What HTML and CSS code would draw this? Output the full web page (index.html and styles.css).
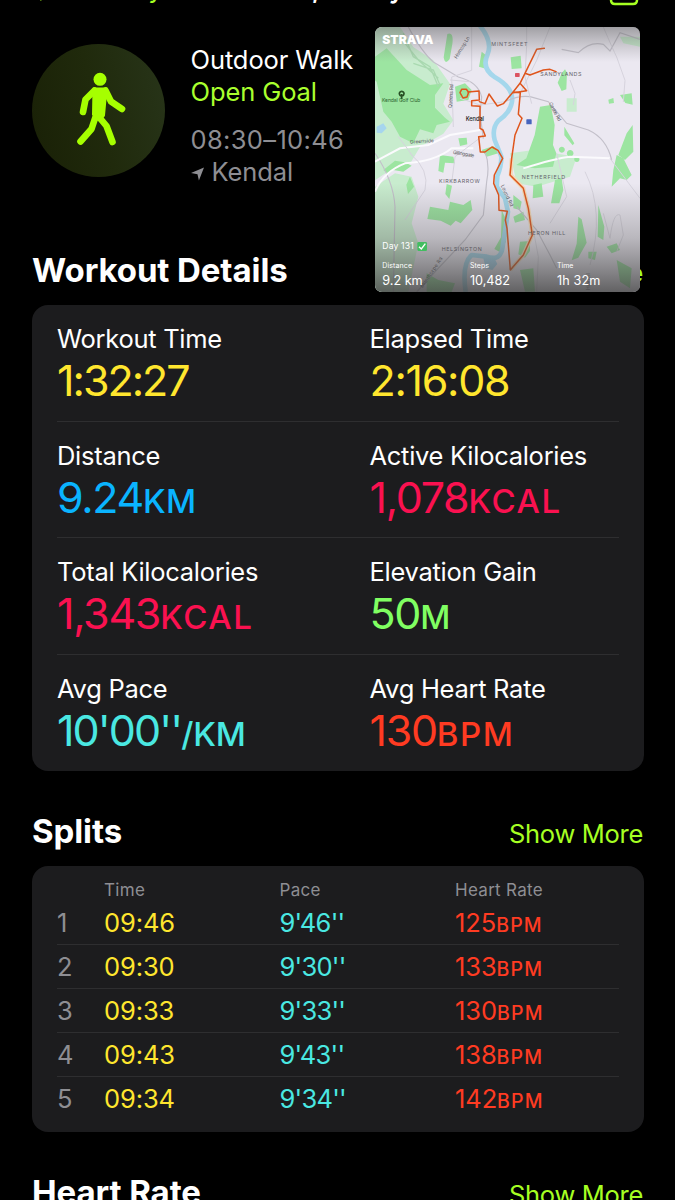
FILE: index.html
```html
<!DOCTYPE html>
<html lang="en">
<head>
<meta charset="utf-8">
<title>Outdoor Walk</title>
<link rel="stylesheet" href="styles.css">
</head>
<body>
<nav class="nav">
  <span class="back"><svg class="chevron" viewBox="0 0 14 24"><path d="M12 2 3 12l9 10"/></svg>Summary</span>
  <span class="nav-title">Tue, 11 May</span>
  <svg class="share" viewBox="0 0 30 36"><path d="M10 12H6q-4 0-4 4v14q0 4 4 4h18q4 0 4-4V16q0-4-4-4h-4M15 22V2M9 8l6-6 6 6"/></svg>
</nav>
<main class="page">
  <header class="summary">
    <div class="badge">
      <svg class="walker" viewBox="0 0 170 160">
        <circle cx="80" cy="49.3" r="6.5"/>
        <path class="torso" d="M73.500 58.500h13l-2.500 27-4.500 5-6.500-6z"/>
        <path class="limb" d="M74.500 60.500 65.500 69.500 63 82M85.500 60.500 91 71.500 102 79M75.500 87 71.500 99 60.500 111.500M79 87 86.500 96 92.500 112"/>
      </svg>
    </div>
    <div class="intro">
      <p class="name">Outdoor Walk</p>
      <p class="goal">Open Goal</p>
      <p class="when">08:30–10:46</p>
      <p class="place"><svg class="arrow" viewBox="0 0 14 14"><path d="M14 0 8.500 14 7 7.200 0 6z"/></svg>Kendal</p>
    </div>
  </header>

  <div class="section-head details-head"><h2>Workout Details</h2><a class="more">Show More</a></div>
  <section class="card details">
    <div class="row">
      <div class="cell"><p class="label">Workout Time</p><p class="value time yellow">1:32:27</p></div>
      <div class="cell"><p class="label">Elapsed Time</p><p class="value yellow">2:16:08</p></div>
    </div>
    <div class="row">
      <div class="cell"><p class="label">Distance</p><p class="value blue">9.24<small>KM</small></p></div>
      <div class="cell"><p class="label">Active Kilocalories</p><p class="value pink">1,078<small>KCAL</small></p></div>
    </div>
    <div class="row">
      <div class="cell"><p class="label">Total Kilocalories</p><p class="value pink">1,343<small>KCAL</small></p></div>
      <div class="cell"><p class="label">Elevation Gain</p><p class="value green">50<small>M</small></p></div>
    </div>
    <div class="row">
      <div class="cell"><p class="label">Avg Pace</p><p class="value pace cyan">10'00''<small>/KM</small></p></div>
      <div class="cell"><p class="label">Avg Heart Rate</p><p class="value red">130<small>BPM</small></p></div>
    </div>
  </section>

  <div class="section-head splits-head"><h2>Splits</h2><a class="more">Show More</a></div>
  <section class="card splits">
    <div class="split-row split-head"><span></span><span>Time</span><span>Pace</span><span>Heart Rate</span></div>
    <div class="split-row"><span class="num">1</span><span class="yellow">09:46</span><span class="pace cyan">9'46''</span><span class="red">125<small>BPM</small></span></div>
    <div class="split-row"><span class="num">2</span><span class="yellow">09:30</span><span class="pace cyan">9'30''</span><span class="red">133<small>BPM</small></span></div>
    <div class="split-row"><span class="num">3</span><span class="yellow">09:33</span><span class="pace cyan">9'33''</span><span class="red">130<small>BPM</small></span></div>
    <div class="split-row"><span class="num">4</span><span class="yellow">09:43</span><span class="pace cyan">9'43''</span><span class="red">138<small>BPM</small></span></div>
    <div class="split-row"><span class="num">5</span><span class="yellow">09:34</span><span class="pace cyan">9'34''</span><span class="red">142<small>BPM</small></span></div>
  </section>

  <div class="section-head heart-head"><h2>Heart Rate</h2><a class="more">Show More</a></div>
</main>

<svg class="map" viewBox="15 21 795 795">
  <defs>
    <linearGradient id="top" x2="0" y2="1"><stop offset="0" stop-color="#555" stop-opacity=".5"/><stop offset="1" stop-color="#777" stop-opacity="0"/></linearGradient>
    <linearGradient id="bottom" x2="0" y2="1"><stop offset="0" stop-color="#555" stop-opacity="0"/><stop offset=".5" stop-color="#555" stop-opacity=".33"/><stop offset="1" stop-color="#444" stop-opacity=".82"/></linearGradient>
  </defs>
  <rect x="15" y="21" width="795" height="795" fill="#ebe8f1"/>
  <g class="meadow">
    <path d="M15 21h75l40 60 60 40 50 70-20 60 30 50-30 40-70 40-30 50-60 20-45 30z"/>
    <path d="M15 500l60-40 50 10 20 60-20 80 20 60-30 146H15z"/>
    <path d="M420 400l70-10 130 20-20 60-100 30-60-10z"/>
    <path d="M590 235l30 0 0 40-30 0zM750 50l60 0v30l-50-10z"/>
  </g>
  <g class="park">
    <path d="M15 110 50 85l60 65 70 45 40-5-25 35 0 38 30 30 15 12-40 10-10 25-40-12-20 42-40-20-25-45-25-30-20-90-20-15z"/>
    <path d="M232 42q20-8 15 30l-8 45q-14 20-18-5zM255 200l30-10 20 20-10 30-35 5zM335 95l12 10-5 40-15-5zM265 355l25-2 2 20-22 5zM422 112l30-5 3 38-30 2z"/>
    <path d="M575 160l10-12 6 10-2 50-14 5-12-25zM510 260l32-5 12 60-5 60 10 25-10 40-55 5-55-10 30-20 25-70zM715 239l15-5 2 15-15 2zM750 225l35-5 3 34-22-5zM770 340l18-25 2 80-25 25-20-15zM600 390a10 10 0 1 0 1 0M575 380a9 9 0 1 0 1 0M620 410a8 8 0 1 0 1 0M583 320l30 50-5 6-25-30z"/>
    <path d="M335 390l35-12 20 20-40 12zM40 450l35-28 30 5 20 10-25 18-30-5-15 12zM120 470l12 30-18 22-5-28zM180 560l55 10 5-25 40 10 22-15 5 30-35 40-15-8-15 15-30-15-40-5zM230 492l16 5-8 40-12-15zM210 405l40 5 5 20-30-2-5 30-15-5z"/>
    <path d="M490 495l25-5 5 40-32 5zM555 480l20-5 5 35-12 40-25 0zM685 555l18 65-3 40-17-10zM625 590l10 8 15 70-25 45-20 8 15-50zM655 695l25 0-5 25-20-5zM710 680l30-10 10 20-25 10zM740 405l20 10 25 50-15 15-20-5-25 25 5-50zM450 665l30-2 0 30-15 20-20-10z"/>
    <path d="M395 570l18 40-5 55-20 30-15-8 20-35zM430 525l25 20-5 25-20-5zM430 590l30-15 5 25-30 8zM170 760l35 20 50 10-10 26h-75zM450 750l40-5 5 70-30 0zM740 720l45 25-5 60-30-20z"/>
  </g>
  <g class="woods"><path d="M100 40l30 70 50 30 25 60M105 70l40 50 60 55M130 130l60 20 20 45"/></g>
  <path class="lake" d="M20 320l20-10 10 15-15 15-15-2zM340 715l30-8 12 25-15 18-20-5z"/>
  <g class="river">
    <path d="M328 15Q370 65 352 105T375 172Q432 205 426 245 420 280 385 302 365 325 374 360L394 410Q394 440 382 468L380 500 405 535 414 575 404 640 398 680Q393 725 350 710L305 705Q275 730 287 816"/>
  </g>
  <g class="roads">
    <path class="main" d="M115 21q40 75 75 105l75 45q60 15 70 60l-5 50 10 75M405 245q40-20 75-15l55 15 55 65 65 20q55 25 70 90M15 400q55 80 60 160l-5 256M345 395q15 40 5 90l-10 100-55 75-85 90-60 66M575 88l50 10q35-35 75-25l20 20 30-55 60 20M440 560l60 70 40 75 20 40"/>
    <path class="street" d="M15 425 90 385 175 375 240 345 330 330M15 515q25-60 90-85 90-5 140-45L310 385M460 445q95-30 140-35l120 5"/>
    <path d="M720 415l90 120M305 21v130l-60 20 5 150M335 350l-80 60-10 80M240 180l60 5M470 21l0 55-5 95 20 80M540 21l-40 100-55 110M600 180l15 40-5 35M700 21q30 70 40 90l25 70-5 65M85 350l45 60M120 400q60 50 45 110l-60 90M560 400l30 130-50 80M645 455q60 120 15 280M700 580l20 75q10-80 30-70l10 60-20 50M270 235l60 20 75-10M490 630l15 80-5 106"/>
  </g>
  <path class="route-glow" d="M425 415l-3 50 38 40 15 60 12 80-27 60-39 45"/>
  <g class="route">
    <path d="M294 216 327 213 328 240 305 242 305 257 330 259 330 325 339 330 346 348 326 350 331 396 345 396 366 381 384 391 398 415 373 465 371 490 386 525 387 571 412 574 406 600 411 625 421 750 460 705 487 645 475 565 460 505 420 465 425 415 435 345 456 295 445 283 451 218 430 216M328 245 345 251 357 222 382 258 400 251 430 215 450 190 470 212 430 218M450 190 465 160 500 88 523 85M465 160 480 165 520 150 540 148 558 155"/>
    <path d="M296 217 291 231 279 234 270 218 275 208 289 208z"/>
  </g>
  <path class="tree" d="M95 214a7 7 0 1 0 .1 0M95 222v16"/>
  <rect x="435" y="159" width="14" height="12" rx="2" fill="#db5361"/><rect x="469" y="298" width="16" height="15" rx="2" fill="#4764bd"/>
  <g class="map-label">
    <text x="36" y="247" class="place-label" textLength="115">Kendal Golf Club</text>
    <text x="287" y="303" class="town" textLength="55">Kendal</text>
    <text x="120" y="371" textLength="72" transform="rotate(-4 120 371)">Greenside</text>
    <text x="248" y="401" textLength="65" transform="rotate(10 248 401)">Gillinggate</text>
    <text x="245" y="265" textLength="72" transform="rotate(-86 245 265)">Queens Rd</text>
    <text x="260" y="117" textLength="75" transform="rotate(-58 260 117)">Horncop Ln</text>
    <text x="536" y="250" textLength="62" transform="rotate(62 536 250)">Castle Rd</text>
    <text x="392" y="497" textLength="70" transform="rotate(65 392 497)">Lound Rd</text>
    <text x="158" y="805" textLength="108" transform="rotate(-56 158 805)">Milnthorpe Rd</text>
    <text x="661" y="810" textLength="50" transform="rotate(-90 661 810)">Hayfell</text>
  </g>
  <g class="district">
    <text x="364" y="79" textLength="108">MINTSFEET</text>
    <text x="511" y="169" textLength="123">SANDYLANDS</text>
    <text x="207" y="488" textLength="122">KIRKBARROW</text>
    <text x="455" y="476" textLength="130">NETHERFIELD</text>
    <text x="474" y="645" textLength="112">HERON HILL</text>
    <text x="215" y="692" textLength="120">HELSINGTON</text>
  </g>
  <rect x="15" y="21" width="795" height="105" fill="url(#top)"/>
  <rect x="15" y="490" width="795" height="326" fill="url(#bottom)"/>
  <g class="overlay">
    <text class="brand" x="37" y="71" textLength="153" lengthAdjust="spacingAndGlyphs">STRAVA</text>
    <text x="37" y="688" class="day" textLength="94">Day 131</text>
    <rect x="142" y="666" width="29" height="27" rx="4" fill="#42bd60"/><path class="check" d="M147 680l7 7 12-16"/>
    <text x="37" y="745" textLength="89">Distance</text><text x="300" y="745" textLength="57">Steps</text><text x="561" y="745" textLength="49">Time</text>
    <text x="37" y="794" class="stat" textLength="121">9.2 km</text><text x="300" y="794" class="stat" textLength="120">10,482</text><text x="561" y="794" class="stat" textLength="130">1h 32m</text>
  </g>
</svg>
</body>
</html>
```

FILE: styles.css
```css
* { box-sizing: border-box; }
body { margin: 0; width: 675px; height: 1200px; overflow: hidden; position: relative; background: #000; color: #fff; font-family: Inter, "Liberation Sans", sans-serif; }
p, h2 { margin: 0; }
.nav { display: flex; justify-content: space-between; align-items: flex-end; height: 36px; margin-top: -30px; padding: 0 36px 0 29px; line-height: 34px; font-size: 26px; }
.back { color: #a6ff22; width: 238px; display: flex; align-items: center; gap: 4px; letter-spacing: -.2px; }
.chevron { width: 14px; height: 24px; fill: none; stroke: #a6ff22; stroke-width: 3; stroke-linecap: round; }
.nav-title { flex: 1; font-weight: 600; letter-spacing: -.6px; }
.share { width: 30px; height: 36px; fill: none; stroke: #a6ff22; stroke-width: 2.5; }
.page { padding: 38px 32px 0; }
.summary { display: flex; gap: 25.500px; height: 206px; }
.badge { width: 133px; height: 133px; border-radius: 50%; background: linear-gradient(75deg, #192006, #202a0c 50%, #28351a); overflow: hidden; }
.walker { display: block; width: 170px; height: 160px; margin: -14px 0 0 -12px; fill: #a6ff00; }
.torso { stroke: #a6ff00; stroke-width: 2; stroke-linejoin: round; }
.limb { fill: none; stroke: #a6ff00; stroke-width: 6.600; stroke-linecap: round; stroke-linejoin: round; }
.intro { font-size: 25.5px; line-height: 32px; letter-spacing: -.1px; white-space: nowrap; }
.goal { color: #a9ff2e; }
.when { margin-top: 16px; letter-spacing: .35px; }
.when, .place { color: #8e8e93; }
.arrow { width: 13px; height: 14px; margin-right: 8px; fill: #8e8e93; }
.section-head { display: flex; justify-content: space-between; align-items: baseline; line-height: 40px; }
.section-head h2 { font-size: 33px; font-weight: 700; letter-spacing: -.1px; }
.more { color: #a6ff22; font-size: 25.5px; letter-spacing: -.3px; }
.details-head { height: 55px; }
.card { background: #1c1c1e; border-radius: 16px; width: 612px; }
.details { height: 466px; padding: 0 25px; }
.row { display: grid; grid-template-columns: 312.500px 1fr; height: 116.700px; padding-top: 18px; border-bottom: 1px solid #2e2e30; }
.row:last-child { border-bottom: 0; }
.label { font-size: 25.5px; line-height: 32px; letter-spacing: -.28px; white-space: nowrap; }
.value { font-size: 43px; line-height: 50px; letter-spacing: -1.3px; white-space: nowrap; }
.value.time { letter-spacing: -2px; }
.value.pace { letter-spacing: -1.9px; }
.value small { font-size: 33px; font-weight: 500; letter-spacing: 1.6px; }
.value.blue small { letter-spacing: .3px; }
.value.pace small { letter-spacing: -.2px; }
.yellow { color: #ffe62e; }
.blue { color: #0ab4ff; }
.pink { color: #fa1150; }
.green { color: #80ff62; }
.cyan { color: #4ae8e2; }
.red { color: #ff3b22; }
.splits-head { height: 55px; margin-top: 40px; }
.splits { height: 266px; padding: 12px 25px; }
.split-row { display: grid; grid-template-columns: 47px 175.500px 175.500px 1fr; height: 44px; line-height: 43px; font-size: 25.5px; letter-spacing: -.1px; border-bottom: 1px solid #2e2e30; }
.split-row:last-child { border-bottom: 0; }
.split-row .pace { letter-spacing: -.75px; }
.split-row small { font-size: 19.500px; font-weight: 500; letter-spacing: 1.2px; }
.split-row.split-head { height: 23px; line-height: 24px; font-size: 17px; letter-spacing: .3px; color: #8e8e93; border: 0; }
.num { color: #8e8e93; }
.heart-head { margin-top: 40px; }
.map { position: absolute; left: 375px; top: 27px; width: 265px; height: 265px; border-radius: 7px; }
.meadow { fill: #c8ecce; }
.park { fill: #9ce5a1; }
.woods { fill: none; stroke: #a9d9b0; stroke-width: 4; }
.lake { fill: #a6d5ee; }
.river { fill: none; stroke: #a4d7ec; stroke-width: 14; stroke-linejoin: round; }
.roads { fill: none; stroke: #d6d3dd; stroke-width: 3; }
.roads .main { stroke: #c3c0ca; stroke-width: 3.500; }
.roads .street { stroke: #fbfafd; stroke-width: 6; }
.route { fill: none; stroke: #df551c; stroke-width: 4.500; stroke-linejoin: round; stroke-linecap: round; }
.route-glow { fill: none; stroke: #f3d9b8; stroke-width: 12; }
.tree { fill: none; stroke: #284f25; stroke-width: 5; }
.map-label { font-size: 15px; fill: #58575d; }
.place-label { fill: #2b632f; }
.town { font-size: 17px; fill: #222; font-weight: 500; }
.district { font-size: 16px; fill: #65636b; }
.overlay { font-size: 21px; fill: #fff; }
.brand { font-size: 37px; font-weight: 900; }
.day { font-size: 26px; }
.stat { font-size: 38px; }
.check { fill: none; stroke: #fff; stroke-width: 4; }
```
